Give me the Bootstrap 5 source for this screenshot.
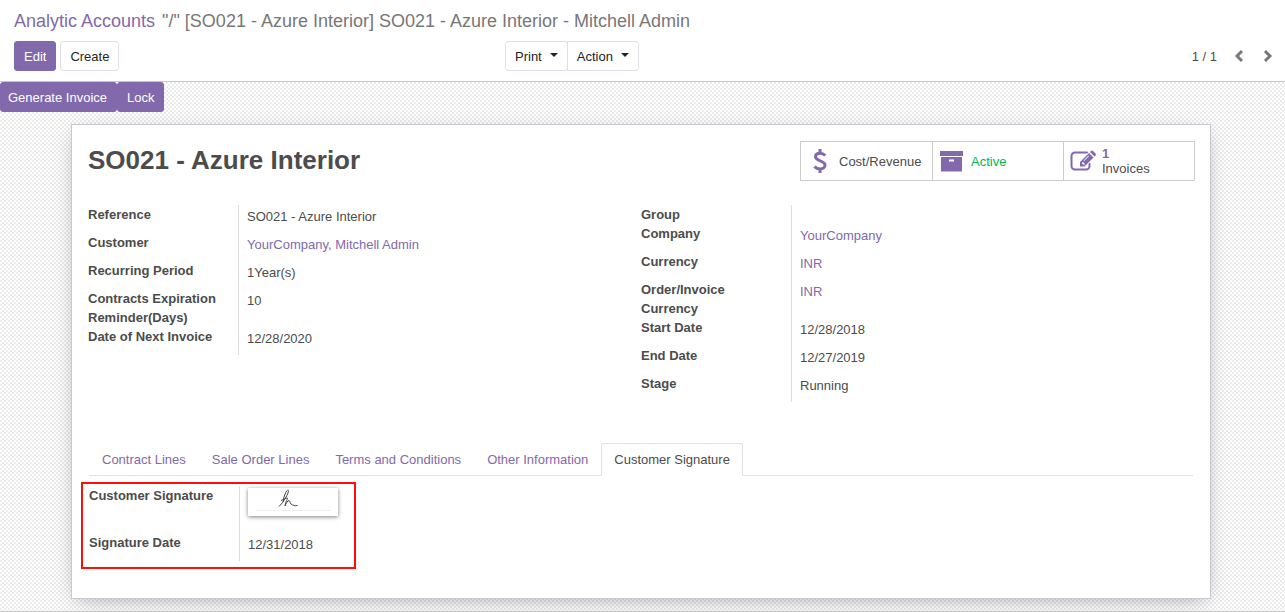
<!DOCTYPE html>
<html lang="en">
<head>
<meta charset="utf-8">
<meta name="viewport" content="width=device-width, initial-scale=1">
<title>Analytic Accounts</title>
<link href="https://cdn.jsdelivr.net/npm/bootstrap@5.3.0/dist/css/bootstrap.min.css" rel="stylesheet">
<style>
:root { --brand: #8269ac; --ink: #4c4c4c; --rule: #dee2e6; }
body { font: 13px/19px "Liberation Sans", Arial, sans-serif; color: var(--ink); }
a { color: var(--brand); text-decoration: none; }
a:hover { text-decoration: underline; }

.control-panel { padding: 8px 12px 10px 14px; border-bottom: 1px solid #c8c8c8; }
.control-panel .breadcrumb { margin-bottom: 6px; font-size: 18px; line-height: 27px; color: #777; }
.control-panel .breadcrumb-item + .breadcrumb-item::before { content: none; }
.control-panel .breadcrumb-item + .breadcrumb-item { padding-left: 7px; }
.control-panel .breadcrumb-item.active { color: #777; }
.btn {
  --bs-btn-font-size: 13px; --bs-btn-line-height: 20px; --bs-btn-border-radius: 3px;
  --bs-btn-padding-x: 9px;
  padding-top: 5px; padding-bottom: 3px;
}
.btn-brand {
  --bs-btn-color: #fff; --bs-btn-bg: var(--brand); --bs-btn-border-color: var(--brand);
  --bs-btn-hover-color: #fff; --bs-btn-hover-bg: #6f5799; --bs-btn-hover-border-color: #6f5799;
}
.btn-plain {
  --bs-btn-color: #212529; --bs-btn-bg: #fff; --bs-btn-border-color: #dee0e9;
  --bs-btn-hover-bg: #f2f2f5; --bs-btn-hover-border-color: #dee0e9;
}
.dropdown-toggle::after { margin-left: 8px; vertical-align: 4px; border-width: 4px 4px 0; }
.action-bar { display: grid; grid-template-columns: 39% auto 1fr; }
.pager { gap: 18px; }
.pager-btn { color: #777; line-height: 0; }

.form-view {
  padding: 0 3px 12px 0;
  background: repeating-conic-gradient(#ebebeb 0 25%, #fff 0 50%) 0 0 / 4px 4px;
  border-bottom: 1px solid #ccc;
}
.status-bar .btn:first-child { padding-left: 7px; }
.sheet {
  max-width: 1140px; min-height: 475px; margin: 12px auto 0; padding: 16px;
  background: #fff; border: 1px solid #c8c8d3; box-shadow: 0 5px 20px -6px rgba(0, 0, 0, .35);
}
.sheet h1 { font-size: 26px; line-height: 38px; }
.stat-group { margin-right: -1px; border: 1px solid #ccc; }
.stat {
  width: 131px; height: 38px; padding: 0 6px; gap: 6px; color: var(--ink);
  background: #fff; border: 0; text-align: left; line-height: 15px;
}
.stat + .stat { border-left: 1px solid #ccc; }
.stat svg { width: 26px; height: 24px; flex: none; fill: var(--brand); }
.stat-value { color: var(--brand); }
.stat-active { color: #00b84f; }

.field-list { display: grid; grid-template-columns: 151px 1fr; margin: 0; }
.field-list dt { padding-right: 8px; border-right: 1px solid #ddd; }
.field-list dd { margin: 0; padding: 2px 0 7px 8px; }
.details { margin-top: 24px; min-height: 238px; }

.notebook { padding: 0 1px; }
.nav-tabs {
  --bs-nav-link-color: var(--brand); --bs-nav-link-hover-color: var(--brand);
  --bs-nav-link-padding-x: 12px; --bs-nav-link-padding-y: 6px;
  --bs-nav-tabs-border-radius: 3px; --bs-nav-tabs-link-active-color: var(--ink);
  --bs-nav-tabs-border-color: #dee0e6;
}
.tab-content { padding-top: 10px; }
.marked { position: relative; }
.marker { position: absolute; inset: -4px auto -8px -8px; width: 275px; border: 2px solid #fb0f06; }
.signature {
  display: block; width: 90px; height: 28px; margin-bottom: 10px;
  background: #fff; box-shadow: 0 1px 4px rgba(0, 0, 0, .5);
}
</style>
</head>
<body>
<header class="control-panel">
  <nav aria-label="Breadcrumb">
    <ol class="breadcrumb">
      <li class="breadcrumb-item"><a href="#">Analytic Accounts</a></li>
      <li class="breadcrumb-item active" aria-current="page">"/" [SO021 - Azure Interior] SO021 - Azure Interior - Mitchell Admin</li>
    </ol>
  </nav>
  <div class="action-bar align-items-center">
    <div class="d-flex gap-1">
      <button type="button" class="btn btn-brand">Edit</button>
      <button type="button" class="btn btn-plain">Create</button>
    </div>
    <div class="btn-group">
      <button type="button" class="btn btn-plain dropdown-toggle">Print</button>
      <button type="button" class="btn btn-plain dropdown-toggle">Action</button>
    </div>
    <div class="pager d-flex justify-content-end align-items-center">
      <span>1 / 1</span>
      <button type="button" class="pager-btn border-0 bg-transparent p-0" aria-label="Previous">
        <svg width="10" height="14" viewBox="0 0 10 14" fill="none" stroke="currentColor" stroke-width="3"><path d="M7 2 2 7l5 5"/></svg>
      </button>
      <button type="button" class="pager-btn border-0 bg-transparent p-0" aria-label="Next">
        <svg width="10" height="14" viewBox="0 0 10 14" fill="none" stroke="currentColor" stroke-width="3"><path d="m2 2 5 5-5 5"/></svg>
      </button>
    </div>
  </div>
</header>

<main class="form-view">
  <div class="status-bar d-flex">
    <button type="button" class="btn btn-brand">Generate Invoice</button>
    <button type="button" class="btn btn-brand">Lock</button>
  </div>

  <section class="sheet">
    <div class="d-flex justify-content-between align-items-start">
      <h1 class="fw-bold mb-0">SO021 - Azure Interior</h1>
      <div class="stat-group d-flex">
        <button type="button" class="stat d-flex align-items-center">
          <svg viewBox="0 0 26 24" aria-hidden="true"><path fill="none" stroke="#8269ac" stroke-width="3" d="M18.300 6.500C16.500 4.800 15 4.300 13 4.300c-2.700 0-4.500 1.400-4.500 3.500 0 4.800 9.500 3.300 9.500 8.300 0 2.300-2 3.800-4.800 3.800-2.400 0-4.400-1-5.700-2.500M13 0v4M13 20v4"/></svg>
          <span>Cost/Revenue</span>
        </button>
        <button type="button" class="stat d-flex align-items-center">
          <svg viewBox="0 0 26 24" aria-hidden="true"><path fill-rule="evenodd" d="M1 2h23v5H1zM2 8h21v14.500H2zM10 10.500v2h5v-2z"/></svg>
          <span class="stat-active">Active</span>
        </button>
        <button type="button" class="stat d-flex align-items-center">
          <svg viewBox="0 0 26 24" aria-hidden="true"><path fill="none" stroke="#8269ac" stroke-width="2" stroke-linecap="round" d="M17 3.500H5a3.500 3.500 0 0 0-3.500 3.500v10A3.500 3.500 0 0 0 5 20.500h11a3.500 3.500 0 0 0 3.500-3.500v-2"/><path fill-rule="evenodd" d="m19 4 4.500 4.500-9 9H10V13zM12 13.500V15h1.500v1.500l1.500-1.500-2-2zM18.500 6.500l-5 5 .6.600 5-5z"/><path d="m20 3 1-1q1-.8 2 0l2.500 2.500q.8 1 0 2l-1 1z"/></svg>
          <span><b class="stat-value d-block">1</b>Invoices</span>
        </button>
      </div>
    </div>

    <div class="details row gx-0 align-items-start">
      <dl class="field-list col-6">
        <dt>Reference</dt><dd>SO021 - Azure Interior</dd>
        <dt>Customer</dt><dd><a href="#">YourCompany, Mitchell Admin</a></dd>
        <dt>Recurring Period</dt><dd>1Year(s)</dd>
        <dt>Contracts Expiration Reminder(Days)</dt><dd>10</dd>
        <dt>Date of Next Invoice</dt><dd>12/28/2020</dd>
      </dl>
      <dl class="field-list col-6">
        <dt>Group</dt><dd></dd>
        <dt>Company</dt><dd><a href="#">YourCompany</a></dd>
        <dt>Currency</dt><dd><a href="#">INR</a></dd>
        <dt>Order/Invoice Currency</dt><dd><a href="#">INR</a></dd>
        <dt>Start Date</dt><dd>12/28/2018</dd>
        <dt>End Date</dt><dd>12/27/2019</dd>
        <dt>Stage</dt><dd>Running</dd>
      </dl>
    </div>

    <div class="notebook">
      <ul class="nav nav-tabs">
        <li class="nav-item"><a class="nav-link" href="#">Contract Lines</a></li>
        <li class="nav-item"><a class="nav-link" href="#">Sale Order Lines</a></li>
        <li class="nav-item"><a class="nav-link" href="#">Terms and Conditions</a></li>
        <li class="nav-item"><a class="nav-link" href="#">Other Information</a></li>
        <li class="nav-item"><a class="nav-link active" aria-current="page" href="#">Customer Signature</a></li>
      </ul>
      <div class="tab-content">
        <div class="marked">
          <dl class="field-list">
            <dt>Customer Signature</dt>
            <dd>
              <svg class="signature" viewBox="0 0 90 28" role="img" aria-label="Signature">
                <path d="M8 22.500h74" stroke="#eee"/>
                <path d="M31 18.500c4-4 8-10 9.500-15 .5-2-1.500-1.500-2.500.5-2 4-3 8-2.500 10M33 12.500c3-1 6-3 6.500-2.500s-2 4-2.500 8c1-3 3-5.500 4-5.500s1 4 3.500 4.500c2 .5 2 1 5 .5" fill="none" stroke="#444" stroke-width="1"/>
              </svg>
            </dd>
            <dt>Signature Date</dt><dd>12/31/2018</dd>
          </dl>
          <div class="marker"></div>
        </div>
      </div>
    </div>
  </section>
</main>
<script src="https://cdn.jsdelivr.net/npm/bootstrap@5.3.0/dist/js/bootstrap.bundle.min.js"></script>
</body>
</html>
